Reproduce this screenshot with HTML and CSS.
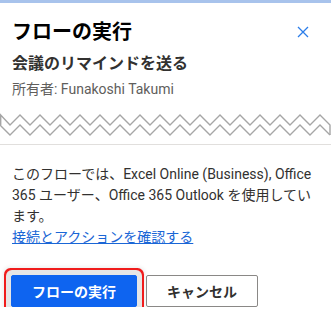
FILE: index.html
```html
<!DOCTYPE html>
<html lang="ja">

<head>
    <meta charset="UTF-8" />
    <meta name="viewport" content="width=device-width, initial-scale=1.0" />
    <title>フローの実行</title>
    <link rel="stylesheet" href="styles.css">
</head>

<body>
    <div class="top-bar"></div>
    <div class="panel">
        <div class="title-row">
            <h1 class="title">フローの実行</h1>
            <svg class="close" width="12" height="12" viewBox="0 0 12 12">
                <path d="M1 1 L11 11 M11 1 L1 11" stroke="#2b7de9" stroke-width="1.3" fill="none" />
            </svg>
        </div>
        <p class="flow-name">会議のリマインドを送る</p>
        <p class="owner">所有者: Funakoshi Takumi</p>
    </div>

    <!-- torn edge -->
    <svg class="tear" width="331" height="24" viewBox="0 0 331 24">
        <path fill="none" stroke="#a6a6a6" stroke-width="1.4"
            d="M0.7 12 L0.7 2 L10 12 L20 2 L30 12 L40 2 L50 12 L60 2 L70 12 L80 2 L90 12 L100 2 L110 12 L120 2 L130 12 L140 2 L150 12 L160 2 L170 12 L180 2 L190 12 L200 2 L210 12 L220 2 L230 12 L240 2 L250 12 L260 2 L270 12 L280 2 L290 12 L300 2 L310 12 L320 2 L330 12 L330 22" />
        <path fill="none" stroke="#a6a6a6" stroke-width="1.4"
            d="M0 12 L10 22 L20 12 L30 22 L40 12 L50 22 L60 12 L70 22 L80 12 L90 22 L100 12 L110 22 L120 12 L130 22 L140 12 L150 22 L160 12 L170 22 L180 12 L190 22 L200 12 L210 22 L220 12 L230 22 L240 12 L250 22 L260 12 L270 22 L280 12 L290 22 L300 12 L310 22 L320 12 L330 22" />
    </svg>
    <div class="divider"></div>

    <div class="content">
        <p class="info">このフローでは、Excel Online (Business), Office 365 ユーザー、Office 365 Outlook を使用しています。</p>
        <a class="link" href="#">接続とアクションを確認する</a>
    </div>

    <div class="actions">
        <button class="btn primary">フローの実行</button>
        <button class="btn">キャンセル</button>
    </div>
</body>

</html>
```

FILE: styles.css
```css
body {
    margin: 0;
    font-family: "Segoe UI", Roboto, "Noto Sans CJK JP", sans-serif;
    color: #323130;
    background: #fff;
}

.top-bar {
    height: 3px;
    background: #a8c3ec;
}

.panel {
    padding: 15px 12px 0 12px;
}

.title-row {
    display: flex;
    justify-content: space-between;
    align-items: center;
}

.title {
    margin: 0;
    font-size: 20px;
    line-height: 28px;
    font-weight: 700;
    color: #000;
}

.close {
    margin-right: 10px;
}

.flow-name {
    margin: 7px 0 0 0;
    font-size: 16px;
    line-height: 22px;
    font-weight: 700;
}

.owner {
    margin: 4px 0 0 0;
    font-size: 14px;
    line-height: 20px;
    color: #605e5c;
}

.tear {
    display: block;
    margin-top: 14px;
}

.divider {
    height: 1px;
    background: #e1dfdd;
    margin-top: 7px;
}

.content {
    padding: 19px 14px 0 12px;
    font-size: 14px;
    line-height: 21px;
}

.info {
    margin: 0;
}

.link {
    color: #1a66d6;
}

.actions {
    display: flex;
    gap: 9px;
    padding: 27px 0 0 11px;
}

.btn {
    height: 32px;
    padding: 0 20px;
    font-family: inherit;
    font-size: 14px;
    font-weight: 700;
    color: #323130;
    background: #fff;
    border: 1px solid #8a8886;
    border-radius: 2px;
}

.primary {
    color: #fff;
    background: #0e64f0;
    border-color: #0e64f0;
    box-shadow: 0 0 0 5px #e6e6e6, 0 0 0 7px #f01c1c, 0 0 4px 8px rgba(0, 0, 0, 0.08);
}
```
